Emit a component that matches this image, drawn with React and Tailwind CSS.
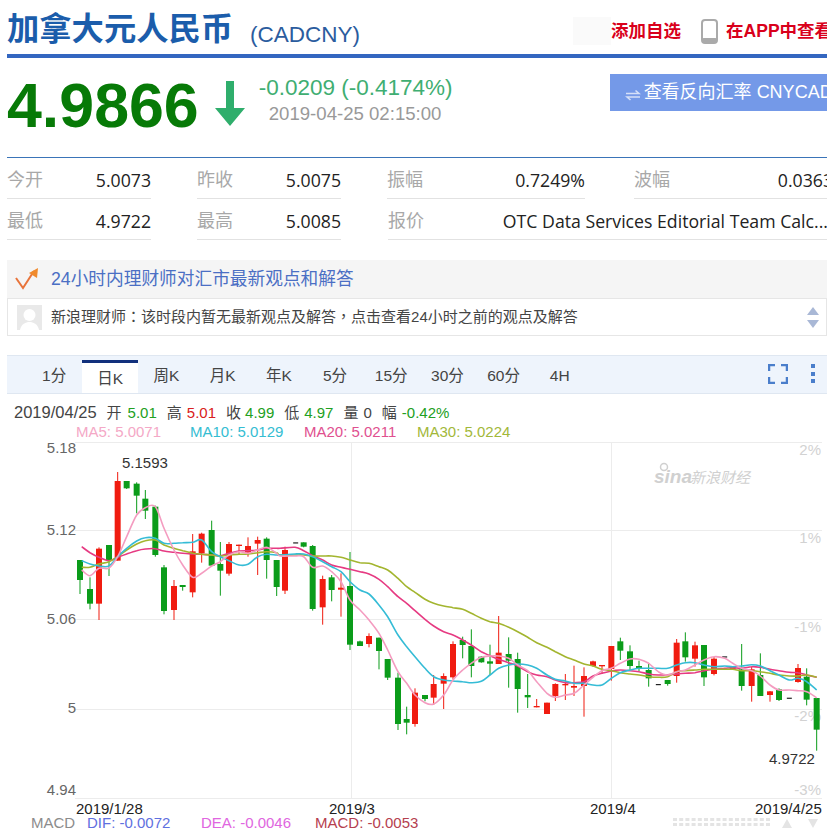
const RED = '#f01c10';
const GREEN = '#0b9c1a';

// candles: [type, wickTop, bodyTop, bodyBottom, wickBottom, x], read off the chart in 3x coords
const zoneA = [
  ['g', 360, 360, 420, 462, 240], ['g', 412, 447, 491, 508, 270], ['r', 322, 326, 491, 540, 297],
  ['g', 315, 315, 360, 408, 327], ['r', 96, 123, 362, 362, 353], ['g', 123, 123, 145, 147, 380],
  ['g', 127, 131, 167, 220, 410], ['g', 150, 176, 212, 237, 436], ['g', 197, 200, 345, 350, 466],
  ['g', 375, 382, 513, 523, 492], ['r', 420, 438, 510, 540, 522], ['g', 435, 435, 441, 452, 548],
  ['r', 282, 334, 457, 472, 578], ['r', 278, 281, 340, 368, 605], ['g', 242, 270, 377, 378, 635],
  ['g', 306, 372, 392, 467, 661], ['r', 306, 312, 401, 407, 687], ['r', 314, 314, 318, 345, 717],
  ['r', 292, 318, 338, 350, 744], ['r', 290, 300, 311, 405, 773], ['g', 292, 296, 360, 416, 800],
  ['g', 360, 360, 441, 468, 830],
];
const zoneB = [
  ['r', 20, 30, 152, 162, 15], ['k', 8, 7, 10, 8, 47], ['g', 7, 7, 20, 22, 71],
  ['g', 15, 18, 207, 212, 98], ['r', 107, 117, 202, 254, 128], ['g', 105, 112, 150, 184, 155],
  ['r', 100, 143, 149, 230, 183], ['g', 36, 138, 314, 330, 210], ['g', 302, 304, 318, 318, 240],
  ['r', 280, 288, 312, 322, 267], ['g', 293, 293, 333, 388, 297], ['g', 357, 357, 413, 420, 323],
  ['g', 398, 413, 552, 570, 354], ['g', 500, 537, 548, 583, 380], ['r', 445, 458, 552, 560, 405],
  ['g', 465, 465, 477, 484, 435], ['r', 405, 432, 473, 495, 461], ['r', 400, 408, 431, 507, 491],
  ['r', 304, 312, 412, 418, 519], ['g', 290, 300, 315, 355, 548], ['g', 268, 318, 378, 412, 574],
  ['g', 348, 350, 367, 368, 604], ['g', 314, 364, 371, 405, 630], ['r', 228, 338, 372, 372, 656],
  ['g', 292, 342, 362, 443, 686], ['g', 338, 357, 447, 518, 713], ['g', 402, 465, 472, 504, 743],
  ['r', 477, 498, 502, 502, 770],
];
const zoneC = [
  ['r', 308, 308, 342, 342, 0], ['r', 250, 252, 288, 303, 25], ['r', 222, 252, 256, 300, 55],
  ['r', 197, 258, 263, 288, 81], ['r', 202, 228, 258, 350, 111], ['r', 182, 184, 198, 200, 138],
  ['r', 195, 195, 199, 222, 165], ['r', 138, 138, 207, 242, 193], ['g', 113, 124, 152, 180, 220],
  ['g', 136, 154, 198, 210, 249], ['g', 182, 198, 205, 215, 276], ['g', 190, 210, 235, 260, 305],
  ['k', 253, 252, 255, 253, 334], ['g', 240, 240, 252, 257, 362], ['r', 117, 128, 228, 248, 389],
  ['g', 97, 124, 172, 185, 415], ['r', 125, 136, 176, 200, 444], ['g', 135, 135, 232, 258, 471],
  ['r', 170, 176, 222, 226, 501], ['k', 170, 169, 172, 170, 533], ['r', 198, 198, 210, 210, 557],
  ['g', 132, 208, 258, 272, 584], ['r', 200, 208, 258, 305, 614], ['g', 160, 225, 288, 288, 640],
  ['r', 273, 274, 285, 305, 669], ['g', 265, 268, 300, 303, 696], ['k', 294, 293, 296, 294, 727],
  ['r', 192, 204, 246, 248, 753], ['g', 205, 230, 299, 316, 779], ['g', 294, 294, 389, 452, 809],
];

const toAbs = (zone, bx, by) =>
  zone.map(([t, a, b, c, d, x]) => ({ t, wt: by + a / 3, bt: by + b / 3, bb: by + c / 3, wb: by + d / 3, x: bx + x / 3 }));

const candles = [...toAbs(zoneA, 0, 440), ...toAbs(zoneB, 280, 540), ...toAbs(zoneC, 547, 600)];

const xsA = [245, 270, 297, 327, 353, 380, 410, 436, 466, 492, 522, 548, 578, 605, 635, 661, 687, 717, 744, 773, 800, 830];
const xsB = [0, 45, 71, 98, 128, 155, 183, 210, 240, 267, 297, 323, 354, 380, 405, 435, 461, 491, 519, 548, 574, 604, 630, 656, 686, 713, 743, 770];
const xsC = [0, 25, 55, 81, 111, 138, 165, 193, 220, 249, 276, 305, 334, 362, 389, 415, 444, 471, 501, 533, 557, 584, 614, 640, 669, 696, 727, 753, 779, 809];

const lines = [
  {
    color: '#e63a82',
    a: [320, 338, 352, 362, 352, 342, 332, 327, 326, 333, 337, 340, 342, 343, 345, 347, 340, 333, 332, 330, 325, 325],
    b: [25, 22, 32, 47, 60, 75, 82, 88, 95, 102, 118, 140, 170, 190, 212, 238, 258, 275, 285, 300, 315, 335, 347, 358, 368, 378, 395, 405],
    c: [230, 240, 248, 248, 245, 228, 220, 213, 210, 212, 215, 222, 225, 224, 222, 220, 218, 212, 208, 205, 203, 205, 200, 202, 208, 212, 217, 218, 225, 232],
  },
  {
    color: '#a3b52f',
    a: [382, 382, 372, 365, 350, 330, 312, 302, 300, 315, 325, 332, 340, 343, 345, 348, 345, 343, 342, 338, 335, 338],
    b: [45, 45, 45, 48, 48, 48, 52, 60, 68, 70, 80, 90, 115, 140, 157, 178, 190, 198, 203, 208, 220, 235, 245, 250, 262, 275, 292, 308],
    c: [142, 155, 170, 180, 192, 198, 208, 212, 218, 222, 225, 230, 232, 230, 215, 212, 210, 208, 208, 208, 208, 212, 212, 215, 220, 225, 228, 228, 225, 232],
  },
  {
    color: '#35bcd6',
    a: [362, 372, 378, 378, 350, 325, 303, 293, 295, 310, 310, 308, 307, 300, 335, 350, 362, 375, 373, 350, 343, 345],
    b: [45, 42, 42, 50, 65, 80, 95, 125, 150, 162, 195, 230, 285, 320, 350, 385, 410, 420, 423, 425, 428, 424, 405, 385, 375, 372, 375, 385],
    c: [225, 238, 243, 250, 250, 255, 255, 235, 218, 210, 205, 205, 205, 205, 195, 188, 188, 195, 200, 198, 200, 198, 194, 198, 212, 225, 240, 235, 245, 270],
  },
  {
    color: '#f49cc0',
    a: [390, 407, 385, 384, 350, 290, 225, 203, 200, 265, 330, 375, 412, 400, 378, 365, 345, 335, 340, 330, 322, 340],
    b: [48, 48, 50, 82, 78, 95, 125, 180, 210, 240, 280, 330, 395, 430, 465, 488, 492, 465, 420, 390, 370, 352, 348, 348, 355, 375, 392, 425],
    c: [280, 292, 285, 280, 255, 232, 212, 205, 190, 177, 178, 190, 215, 225, 215, 210, 195, 180, 170, 175, 190, 205, 212, 228, 255, 270, 270, 272, 275, 293],
  },
];

// catmull-rom through the points, so the averages read as curves
const smooth = (pts) => {
  let d = `M${pts[0][0].toFixed(1)} ${pts[0][1].toFixed(1)}`;
  for (let i = 0; i < pts.length - 1; i++) {
    const p0 = pts[i - 1] || pts[i];
    const p1 = pts[i];
    const p2 = pts[i + 1];
    const p3 = pts[i + 2] || p2;
    const c1x = p1[0] + (p2[0] - p0[0]) / 6;
    const c1y = p1[1] + (p2[1] - p0[1]) / 6;
    const c2x = p2[0] - (p3[0] - p1[0]) / 6;
    const c2y = p2[1] - (p3[1] - p1[1]) / 6;
    d += `C${c1x.toFixed(1)} ${c1y.toFixed(1)} ${c2x.toFixed(1)} ${c2y.toFixed(1)} ${p2[0].toFixed(1)} ${p2[1].toFixed(1)}`;
  }
  return d;
};

const linePath = (l) =>
  smooth([
    ...l.a.map((y, i) => [xsA[i] / 3, 440 + y / 3]),
    ...l.b.map((y, i) => [280 + xsB[i] / 3, 540 + y / 3]),
    ...l.c.map((y, i) => [547 + xsC[i] / 3, 600 + y / 3]),
  ]);

const tabs = ['1分', '日K', '周K', '月K', '年K', '5分', '15分', '30分', '60分', '4H'];

function StatCell({ label, value, className }) {
  return (
    <div className={`flex items-center justify-between border-b border-[#e2e2e2] h-[41px] pt-[5px] ${className}`}>
      <span className="text-[#a8a8a8] text-[18px]">{label}</span>
      <span className="text-[#222] text-[17.7px] font-['Open_Sans','Noto_Sans_CJK_SC',sans-serif] whitespace-nowrap">{value}</span>
    </div>
  );
}

function Chart() {
  return (
    <svg width="827" height="390" viewBox="0 440 827 390" className="block" style={{ fontFamily: '"Liberation Sans", sans-serif' }}>
      {[442, 530, 619, 709, 798].map((y) => (
        <line key={y} x1="75" x2="822" y1={y + 0.5} y2={y + 0.5} stroke="#ececec" />
      ))}
      {[351, 611].map((x) => (
        <line key={x} x1={x + 0.5} x2={x + 0.5} y1="442" y2="798" stroke="#ececec" />
      ))}

      <g fill="#d0d0d0">
        <circle cx="664" cy="467" r="3.5" fill="none" stroke="#d0d0d0" strokeWidth="1.5" />
        <text x="654" y="483" fontSize="19" fontWeight="700" fontStyle="italic">sina</text>
        <text x="690" y="483" fontSize="15" fontStyle="italic" style={{ fontFamily: '"Noto Sans CJK SC", sans-serif' }}>新浪财经</text>
      </g>

      <g fontSize="15" fill="#666" textAnchor="end">
        <text x="76" y="453">5.18</text>
        <text x="76" y="535">5.12</text>
        <text x="76" y="624">5.06</text>
        <text x="76" y="713">5</text>
        <text x="76" y="795">4.94</text>
      </g>
      <g fontSize="15" fill="#d2d2d2" textAnchor="end" fontWeight="500">
        <text x="821" y="455">2%</text>
        <text x="821" y="543">1%</text>
        <text x="821" y="632">-1%</text>
        <text x="821" y="721">-2%</text>
        <text x="821" y="795">-3%</text>
      </g>

      {candles.map((c, i) => {
        if (c.t === 'k') {
          return <rect key={i} x={c.x - 2.5} y={c.bt} width="5" height="1.2" fill="#222" />;
        }
        const fill = c.t === 'r' ? RED : GREEN;
        return (
          <g key={i} fill={fill}>
            <rect x={c.x - 0.5} y={c.wt} width="1" height={c.wb - c.wt} />
            <rect x={c.x - 3} y={c.bt} width="6" height={Math.max(c.bb - c.bt, 1)} />
          </g>
        );
      })}

      {lines.map((l) => (
        <path key={l.color} d={linePath(l)} fill="none" stroke={l.color} strokeWidth="1.6" />
      ))}

      <text x="122" y="468" fontSize="15" fill="#333">5.1593</text>
      <text x="769" y="764" fontSize="15" fill="#333">4.9722</text>

      <g fontSize="15" fill="#222">
        <text x="76" y="814">2019/1/28</text>
        <text x="329" y="814">2019/3</text>
        <text x="590" y="814">2019/4</text>
        <text x="755" y="814">2019/4/25</text>
      </g>

      <g fontSize="15">
        <text x="31" y="828" fill="#8c8c8c">MACD</text>
        <text x="87" y="828" fill="#5f70e0">DIF: -0.0072</text>
        <text x="201" y="828" fill="#e066e0">DEA: -0.0046</text>
        <text x="315" y="828" fill="#b5404f">MACD: -0.0053</text>
      </g>

      <g fill="#e4e4e4">
        {Array.from({ length: 16 }).map((_, i) => (
          <g key={i}>
            <rect x={673 + i * 6.2} y="818" width="4" height="3" />
            <rect x={673 + i * 6.2} y="823" width="4" height="3" />
          </g>
        ))}
        <polygon points="782,828 787,819 792,828" />
        <polygon points="808,819 818,819 813,828" />
      </g>
    </svg>
  );
}

export default function App() {
  return (
    <div className="w-[827px] h-[830px] overflow-hidden bg-white font-['Liberation_Sans','Noto_Sans_CJK_SC',sans-serif]">
      {/* title */}
      <div className="ml-[7px] w-[840px] h-[58px] border-b-[4px] border-[#3366c0] flex items-start whitespace-nowrap">
        <h1 className="mt-[13px] text-[32.3px] leading-none font-bold text-[#1b5dab]">加拿大元人民币</h1>
        <span className="ml-[17px] mt-[24px] text-[22.5px] leading-none text-[#2b5c9e]">(CADCNY)</span>
        <div className="ml-[213px] w-[38px] h-[28px] mt-[17px] bg-[#fafafa]" />
        <span className="mt-[23px] text-[17.5px] leading-none font-bold text-[#d9001b]">添加自选</span>
        <svg width="17" height="25" viewBox="0 0 17 25" className="ml-[20px] mt-[19px] shrink-0">
          <rect x="1" y="1" width="15" height="23" rx="3" fill="none" stroke="#aaa" strokeWidth="2" />
          <rect x="1" y="19" width="15" height="5" rx="1.5" fill="#aaa" />
        </svg>
        <span className="ml-[8px] mt-[23px] text-[17.5px] leading-none font-bold text-[#d9001b]">在APP中查看</span>
      </div>

      {/* price */}
      <div className="ml-[7px] w-[840px] h-[100px] border-b border-[#3a74b8] flex items-start whitespace-nowrap">
        <span className="mt-[14px] text-[62.7px] leading-[66px] font-bold text-[#077a07]">4.9866</span>
        <svg width="32" height="47" viewBox="0 0 32 47" className="ml-[15px] mt-[22px] shrink-0">
          <polygon points="12,1 20,1 20,28 31,28 16,46 1,28 12,28" fill="#2fae6c" />
        </svg>
        <div className="ml-[13px] mt-[16px] flex flex-col">
          <span className="text-[22.5px] leading-[28px] text-[#3fae72]">-0.0209 (-0.4174%)</span>
          <span className="ml-[10px] text-[18.6px] leading-[24px] text-[#999]">2019-04-25 02:15:00</span>
        </div>
        <div className="ml-[157px] mt-[16px] w-[230px] h-[37px] bg-[#7499e8] flex items-center pl-[15px] text-white text-[18px]">
          <svg width="16" height="16" viewBox="0 0 16 16" className="mt-[4px] shrink-0">
            <path d="M1 6.5H14L10.5 3.5M15 10H2L5.5 13" fill="none" stroke="#d5e0f8" strokeWidth="1.6" />
          </svg>
          <span className="ml-[3px]">查看反向汇率 CNYCAD</span>
        </div>
      </div>

      {/* stats */}
      <div className="ml-[7px] w-[840px]">
        <div className="flex">
          <StatCell label="今开" value="5.0073" className="w-[144px] mr-[46px]" />
          <StatCell label="昨收" value="5.0075" className="w-[144px] mr-[46px]" />
          <StatCell label="振幅" value="0.7249%" className="w-[198px] mr-[49px]" />
          <StatCell label="波幅" value="0.0363" className="w-[199px]" />
        </div>
        <div className="flex">
          <StatCell label="最低" value="4.9722" className="w-[144px] mr-[46px]" />
          <StatCell label="最高" value="5.0085" className="w-[144px] mr-[47px]" />
          <StatCell label="报价" value="OTC Data Services Editorial Team Calc..." className="w-[440px]" />
        </div>
      </div>

      {/* advisor */}
      <div className="ml-[7px] mt-[20px] h-[38px] bg-[#f5f5f5] flex items-center">
        <svg width="24" height="24" viewBox="0 0 24 24" className="ml-[8px] shrink-0">
          <path d="M1 11L8 21L19 4" fill="none" stroke="#e8743b" strokeWidth="2" />
          <polygon points="14,6 23,1 22,11" fill="#f08a2c" />
        </svg>
        <span className="ml-[12px] text-[17.7px] text-[#4b6fc4]">24小时内理财师对汇市最新观点和解答</span>
      </div>
      <div className="ml-[7px] h-[38px] border border-[#e6e6e6] flex items-center">
        <div className="ml-[9px] w-[25px] h-[25px] bg-[#e9e9e9] overflow-hidden shrink-0">
          <svg width="25" height="25" viewBox="0 0 25 25">
            <circle cx="12.5" cy="10" r="6" fill="#fff" />
            <path d="M3 25C4 19 9 17 12.5 17S21 19 22 25Z" fill="#fff" />
          </svg>
        </div>
        <span className="ml-[9px] text-[15px] text-[#444] whitespace-nowrap">
          新浪理财师<span className="font-['Noto_Sans_CJK_TC',sans-serif]">：</span>该时段内暂无最新观点及解答<span className="font-['Noto_Sans_CJK_TC',sans-serif]">，</span>点击查看24小时之前的观点及解答
        </span>
        <div className="ml-auto mr-[7px] flex flex-col gap-[5px]">
          <svg width="12" height="8" viewBox="0 0 12 8" className="block"><polygon points="6,0 12,8 0,8" fill="#a9b8d6" /></svg>
          <svg width="12" height="8" viewBox="0 0 12 8" className="block"><polygon points="0,0 12,0 6,8" fill="#a9b8d6" /></svg>
        </div>
      </div>

      {/* tabs */}
      <div className="ml-[7px] mt-[19px] h-[39px] bg-[#eef4fc] border-y border-[#dfe7f1] flex items-end pl-[19px]">
        {tabs.map((t, i) =>
          i === 1 ? (
            <div key={t} className="w-[56.2px] h-[33px] bg-white border-t-[3px] border-[#12307c] flex items-center justify-center pt-[2px] text-[15.5px] text-[#444]">{t}</div>
          ) : (
            <div key={t} className="w-[56.2px] h-[37px] flex items-center justify-center pt-[2px] text-[15.5px] text-[#444]">{t}</div>
          )
        )}
        <svg width="20" height="20" viewBox="0 0 20 20" className="ml-auto mb-[9px] shrink-0">
          <path d="M1 7V1H7M13 1H19V7M19 13V19H13M7 19H1V13" fill="none" stroke="#4a7ecb" strokeWidth="2.5" />
        </svg>
        <div className="ml-[23px] mr-[12px] mb-[10px] flex flex-col gap-[3.5px]">
          <div className="w-[4px] h-[4px] bg-[#4a7ecb]" />
          <div className="w-[4px] h-[4px] bg-[#4a7ecb]" />
          <div className="w-[4px] h-[4px] bg-[#4a7ecb]" />
        </div>
      </div>

      {/* quote line */}
      <div className="ml-[14px] mt-[9px] h-[18px] flex items-center text-[15px] leading-none text-[#444] whitespace-nowrap">
        <span className="text-[16.5px] mr-[10px]">2019/04/25</span>
        <span className="mr-[6px]">开</span><span className="text-[#22a022] mr-[10px]">5.01</span>
        <span className="mr-[5px]">高</span><span className="text-[#d92020] mr-[10px]">5.01</span>
        <span className="mr-[4px]">收</span><span className="text-[#22a022] mr-[10px]">4.99</span>
        <span className="mr-[5px]">低</span><span className="text-[#22a022] mr-[10px]">4.97</span>
        <span className="mr-[5px]">量</span><span className="mr-[10px]">0</span>
        <span className="mr-[5px]">幅</span><span className="text-[#22a022]">-0.42%</span>
      </div>
      <div className="ml-[76px] h-[19px] pt-[2px] flex items-center text-[15px] leading-none whitespace-nowrap">
        <span className="w-[114px] text-[#f4a8c6]">MA5: 5.0071</span>
        <span className="w-[114px] text-[#35bdd2]">MA10: 5.0129</span>
        <span className="w-[113px] text-[#e0508f]">MA20: 5.0211</span>
        <span className="text-[#a2b83a]">MA30: 5.0224</span>
      </div>

      <Chart />
    </div>
  );
}
